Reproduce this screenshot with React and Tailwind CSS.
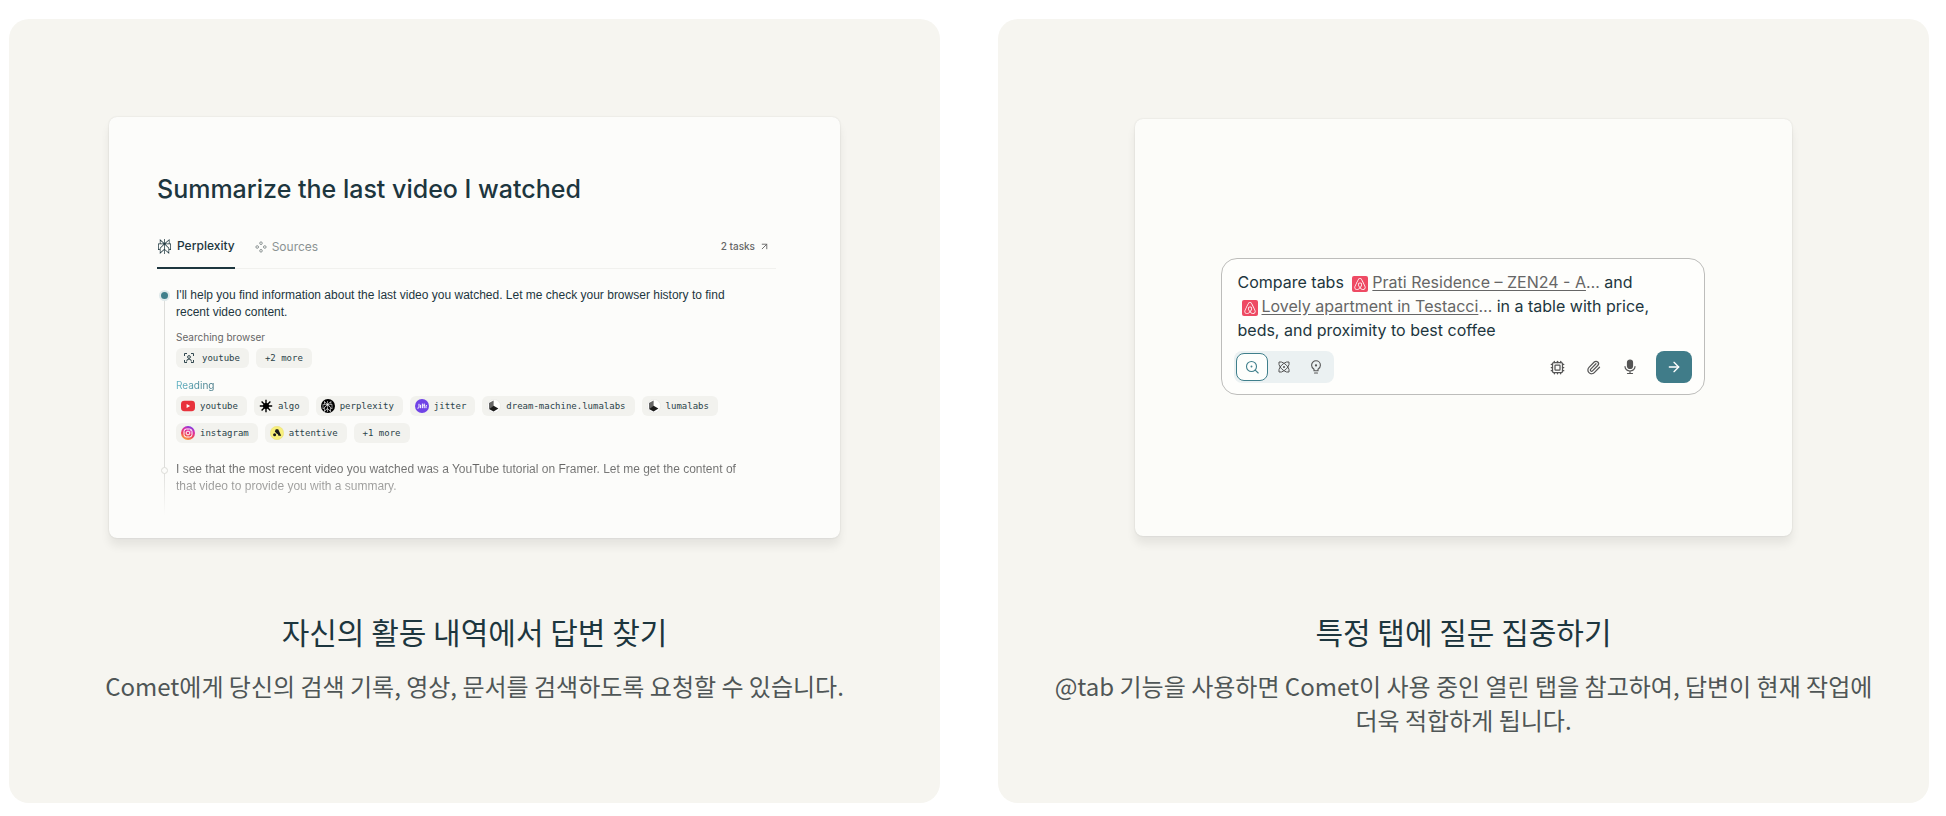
import React from 'react';
import { ArrowRight, ArrowUpRight, Cpu, Paperclip } from 'lucide-react';
import { SiAirbnb, SiPerplexity } from 'react-icons/si';

const readingRows = [
  [
    { name: 'youtube', icon: 'youtube' },
    { name: 'algo', icon: 'algo' },
    { name: 'perplexity', icon: 'perplexity' },
    { name: 'jitter', icon: 'jitter' },
    { name: 'dream-machine.lumalabs', icon: 'luma' },
    { name: 'lumalabs', icon: 'luma' },
  ],
  [
    { name: 'instagram', icon: 'instagram' },
    { name: 'attentive', icon: 'attentive' },
    { name: '+1 more' },
  ],
];

const ChipIcon = ({ type }) => {
  if (type === 'scan') {
    return (
      <svg viewBox="0 0 10 10" className="mx-[3px] size-[10px]" fill="none" stroke="#1d363e" strokeWidth="0.9">
        <path d="M0.5 3V0.5H3M7 0.5h2.5V3M9.5 7v2.5H7M3 9.5H0.5V7" />
        <circle cx="5" cy="4" r="1.4" />
        <path d="M2.6 8.5q0-2.4 2.4-2.4t2.4 2.4" />
      </svg>
    );
  }
  if (type === 'perplexity') {
    return (
      <span className="flex size-[14px] items-center justify-center rounded-full bg-black text-white">
        <SiPerplexity className="size-[11px]" />
      </span>
    );
  }
  return (
    <svg viewBox="0 0 14 14" className="size-[14px]">
      {type === 'youtube' && (
        <>
          <rect x="0" y="1.8" width="14" height="10.4" rx="3.4" fill="#e8323c" />
          <path d="M5.6 4.9v4.2L9.2 7z" fill="#fff" />
        </>
      )}
      {type === 'algo' && (
        <>
          <path d="M7 0.8v12.4M0.8 7h12.4M2.6 2.6l8.8 8.8M11.4 2.6l-8.8 8.8" stroke="#000" strokeWidth="1.4" />
          <circle cx="7" cy="7" r="3" fill="#000" />
        </>
      )}
      {type === 'jitter' && (
        <>
          <circle cx="7" cy="7" r="7" fill="#7043e6" />
          <path
            d="M4 4.8v3.4q0 1.2-1.6 1M5.6 5.8v3.4M7.4 4.6v4.6M9.2 4.6v4.6M8.4 6.2h1.8M11 9.2V7.4q0-1 1-1"
            stroke="#fff"
            strokeWidth="1"
            fill="none"
          />
        </>
      )}
      {type === 'luma' && (
        <>
          <circle cx="7" cy="7" r="6.5" fill="#fff" stroke="#e6e6e2" strokeWidth="0.6" />
          <path d="M6.6 1.6v5.6L2 10V4z" fill="#666" />
          <path d="M6.6 6.8l4.8 2.6-4.8 3.2L2 10z" fill="#1c1c1c" />
        </>
      )}
      {type === 'instagram' && (
        <>
          <defs>
            <linearGradient id="insta" x1="0.2" y1="1" x2="0.6" y2="0">
              <stop offset="0" stopColor="#fbb33b" />
              <stop offset="0.4" stopColor="#f0435a" />
              <stop offset="0.75" stopColor="#d62fb0" />
              <stop offset="1" stopColor="#7b3be0" />
            </linearGradient>
          </defs>
          <circle cx="7" cy="7" r="7" fill="url(#insta)" />
          <rect x="3" y="3" width="8" height="8" rx="2.4" fill="none" stroke="#fff" />
          <circle cx="7" cy="7" r="1.9" fill="none" stroke="#fff" />
          <circle cx="9.3" cy="4.7" r="0.5" fill="#fff" />
        </>
      )}
      {type === 'attentive' && (
        <>
          <circle cx="7" cy="7" r="6.7" fill="#f8ef7a" stroke="#e6dc78" strokeWidth="0.5" />
          <path d="M5.8 3.2h2.4l3 6.6H8.4q0-2-1.8-2.4L4.8 5.6z" fill="#1a1a1a" />
          <circle cx="4.6" cy="8.8" r="1.5" fill="#1a1a1a" />
        </>
      )}
    </svg>
  );
};

const Chip = ({ name, icon }) => (
  <li
    className={`flex h-5 items-center gap-[5px] rounded-md bg-[#f2f2ee] pr-[9px] font-['DejaVu_Sans_Mono',monospace] text-[9px] leading-5 text-[#2a4249] ${icon ? 'pl-[5px]' : 'pl-[9px]'}`}
  >
    {icon && <ChipIcon type={icon} />}
    {name}
  </li>
);

const SourcesIcon = () => (
  <svg viewBox="0 0 12 12" className="size-3" fill="none" stroke="currentColor" strokeWidth="1">
    <circle cx="6" cy="2.2" r="1.3" />
    <circle cx="6" cy="9.8" r="1.3" />
    <circle cx="2.2" cy="6" r="1.3" />
    <circle cx="9.8" cy="6" r="1.3" />
  </svg>
);

const SearchIcon = () => (
  <svg viewBox="0 0 14 14" className="size-[14px]" fill="none" stroke="currentColor" strokeWidth="1.1" strokeLinecap="round">
    <circle cx="6.5" cy="6.5" r="5" />
    <path d="M10.2 10.2l3 2.8" />
    <circle cx="6.5" cy="6.5" r="0.4" fill="currentColor" />
  </svg>
);

const ResearchIcon = () => (
  <svg viewBox="0 0 14 14" className="size-[14px]" fill="none" stroke="currentColor" strokeWidth="1" strokeLinejoin="round">
    <path d="M2 2h2.5q6 2.5 7.5 7.5V12H9.5Q3.5 9.5 2 4.5z" />
    <path d="M12 2H9.5Q3.5 4.5 2 9.5V12h2.5q6-2.5 7.5-7.5z" />
    <circle cx="7" cy="7" r="0.6" fill="currentColor" />
  </svg>
);

const BulbIcon = () => (
  <svg viewBox="0 0 14 14" className="size-[14px]" fill="none" stroke="currentColor" strokeWidth="1.1" strokeLinecap="round">
    <path d="M5 9.3C3.5 8.3 2.6 7 2.6 5.2a4.4 4.4 0 0 1 8.8 0C11.4 7 10.5 8.3 9 9.3V10.8H5zM5.5 13h3" />
    <circle cx="7" cy="5.4" r="0.6" fill="currentColor" />
  </svg>
);

const MicIcon = () => (
  <svg viewBox="0 0 14 16" className="h-4 w-[14px]" fill="none" stroke="currentColor" strokeWidth="1.2" strokeLinecap="round">
    <rect x="4.5" y="1" width="5" height="8.5" rx="2.5" fill="currentColor" />
    <path d="M2 7.5a5 4.5 0 0 0 10 0M7 12v2.5M4.5 14.5h5" />
  </svg>
);

const TabLink = ({ children }) => (
  <>
    <span className="mx-1 inline-flex size-4 items-center justify-center rounded-xs bg-[#ee4a63] align-[-2px] text-white">
      <SiAirbnb className="size-3" />
    </span>
    <a href="#tab" className="text-[#666] underline underline-offset-2">{children}</a>
    <span className="text-[#666]">…</span>
  </>
);

const FeatureCard = ({ title, text, children }) => (
  <article className="flex min-h-[784px] flex-1 flex-col rounded-[20px] bg-[#f6f5f0]">
    <div className="flex h-[577px] items-center justify-center pt-10">{children}</div>
    <div className="px-12 pt-[15px] text-center font-['Noto_Sans_CJK_KR',sans-serif] break-keep">
      <h2 className="text-[30px] leading-10 text-[#1d363e]">{title}</h2>
      <p className="mt-[18px] text-2xl leading-[34px] text-[#4f5656]">{text}</p>
    </div>
  </article>
);

const HistoryPanel = () => (
  <section className="h-[421px] w-[731px] rounded-lg bg-[#fcfcfa] px-12 pt-[54px] shadow-[0_0_2px_rgba(0,0,0,0.12),0_8px_10px_rgba(0,0,0,0.07)]">
    <h3 className="text-[25px] leading-9 font-medium text-[#1d363e]">Summarize the last video I watched</h3>

    <div className="mt-[18px] mr-4 flex h-[44px] items-stretch border-b border-[#f1f1ee]">
      <button className="-mb-px flex items-center gap-[5px] border-b-2 border-[#1d363e] text-xs font-medium text-[#1d363e]">
        <SiPerplexity className="size-[15px]" />
        Perplexity
      </button>
      <button className="ml-5 flex items-center gap-[5px] text-xs text-[#8b9393]">
        <SourcesIcon />
        Sources
      </button>
      <button className="ml-auto flex items-center gap-1 pr-[6px] text-[10px] font-medium text-[#666]">
        2 tasks
        <ArrowUpRight className="size-[11px]" />
      </button>
    </div>

    <ol className="relative mt-[18px] ml-[7px] pr-10 pl-3">
      <span className="absolute top-2 left-0 h-[220px] w-px bg-linear-to-b from-[#dededb] from-80% to-transparent" />
      <li className="relative">
        <span className="absolute top-[3px] left-[-17px] flex size-[11px] items-center justify-center rounded-full bg-[#dfe9ea]">
          <span className="size-[7px] rounded-full bg-[#3f7f8b]" />
        </span>
        <p className="font-['Liberation_Sans',sans-serif] text-xs leading-[17px] text-[#1d363e]">
          I'll help you find information about the last video you watched. Let me check your browser history to find
          recent video content.
        </p>
        <p className="mt-2 text-[10px] leading-4 text-[#666]">Searching browser</p>
        <ul className="mt-[3px] flex gap-[7px]">
          <Chip name="youtube" icon="scan" />
          <Chip name="+2 more" />
        </ul>
        <p className="mt-[9px] w-10 bg-linear-to-r from-[#5fb3c4] to-[#3f7280] bg-clip-text text-[10px] leading-4 text-transparent">Reading</p>
        {readingRows.map((row, index) => (
          <ul key={index} className={`flex gap-[7px] ${index ? 'mt-[7px]' : 'mt-[3px]'}`}>
            {row.map((chip) => (
              <Chip key={chip.name} {...chip} />
            ))}
          </ul>
        ))}
      </li>
      <li className="relative mt-[18px]">
        <span className="absolute top-[6px] left-[-15px] size-[7px] rounded-full border border-[#dcdcd8] bg-[#fcfcfa]" />
        <p className="bg-linear-to-b from-[#5c5c5c] to-[#b5b5b3] bg-clip-text font-['Liberation_Sans',sans-serif] text-xs leading-[17px] text-transparent">
          I see that the most recent video you watched was a YouTube tutorial on Framer. Let me get the content of
          that video to provide you with a summary.
        </p>
      </li>
    </ol>
  </section>
);

const PromptPanel = () => (
  <section className="flex h-[417px] w-[657px] items-center justify-center rounded-lg bg-[#fcfcf9] pr-[2px] pb-[2px] shadow-[0_0_2px_rgba(0,0,0,0.12),0_8px_10px_rgba(0,0,0,0.07)]">
    <form className="w-[484px] rounded-2xl border border-[#bdbdbb] bg-[#fefefc] px-3 pt-[11px] pb-[11px]" onSubmit={(e) => e.preventDefault()}>
      <p className="px-1 text-base leading-6 text-[#1d363e]">
        Compare tabs{' '}
        <TabLink>Prati Residence – ZEN24 - A</TabLink>
        {' '}and
        <br />
        <TabLink>Lovely apartment in Testacci</TabLink>
        {' '}in a table with price,
        <br />
        beds, and proximity to best coffee
      </p>
      <div className="mt-[9px] flex items-center text-[#555]">
        <div className="flex h-8 w-[100px] items-center rounded-lg bg-[#ebf1f2] p-[2px]">
          <button type="button" aria-label="Search" className="flex h-7 w-8 items-center justify-center rounded-lg border border-[#3f7f8b] bg-[#fdfefc] text-[#3f7f8b]">
            <SearchIcon />
          </button>
          <button type="button" aria-label="Research" className="flex h-7 w-8 items-center justify-center">
            <ResearchIcon />
          </button>
          <button type="button" aria-label="Labs" className="flex h-7 w-8 items-center justify-center">
            <BulbIcon />
          </button>
        </div>
        <div className="ml-auto flex items-center">
          <button type="button" aria-label="Model" className="flex h-8 w-9 items-center justify-center">
            <Cpu className="size-[15px]" />
          </button>
          <button type="button" aria-label="Attach" className="flex h-8 w-9 items-center justify-center">
            <Paperclip className="size-[15px]" />
          </button>
          <button type="button" aria-label="Dictate" className="flex h-8 w-9 items-center justify-center">
            <MicIcon />
          </button>
          <button type="submit" aria-label="Submit" className="ml-2 flex h-8 w-9 items-center justify-center rounded-lg bg-[#407c89] text-white">
            <ArrowRight className="size-4" />
          </button>
        </div>
      </div>
    </form>
  </section>
);

const App = () => (
  <main className="flex gap-[58px] bg-white pt-[19px] pr-[17px] pb-[13px] pl-[9px] font-[Inter,sans-serif]">
    <FeatureCard
      title="자신의 활동 내역에서 답변 찾기"
      text="Comet에게 당신의 검색 기록, 영상, 문서를 검색하도록 요청할 수 있습니다."
    >
      <HistoryPanel />
    </FeatureCard>
    <FeatureCard
      title="특정 탭에 질문 집중하기"
      text="@tab 기능을 사용하면 Comet이 사용 중인 열린 탭을 참고하여, 답변이 현재 작업에 더욱 적합하게 됩니다."
    >
      <PromptPanel />
    </FeatureCard>
  </main>
);

export default App;
